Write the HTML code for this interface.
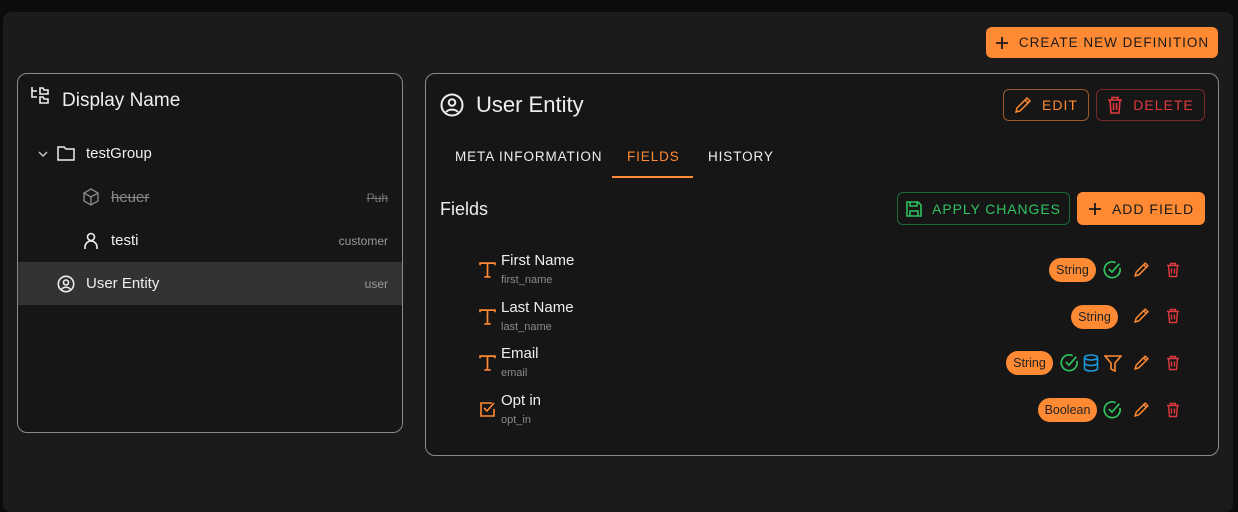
<!DOCTYPE html>
<html><head><meta charset="utf-8"><style>
*{box-sizing:border-box;margin:0;padding:0}
body{width:1238px;height:496px;background:#0c0c0c;font-family:"Liberation Sans",sans-serif;color:#eee;position:relative;overflow:hidden}
.abs{position:absolute}
.wrap{left:3px;top:12px;width:1230px;height:500px;background:#1b1b1b;border-radius:8px}
.card{background:#161616;border:1px solid #8a8a8a;border-radius:10px}
.btn{display:flex;align-items:center;justify-content:center;gap:10px;border-radius:6px;font-size:14px;letter-spacing:1px;font-weight:500}
.or{background:#ff8a33;color:#1a1a1a}
svg{display:block}
.chip{background:#ff8a33;color:#222;font-size:12.5px;border-radius:12px;height:24px;display:flex;align-items:center;justify-content:center}
.fn{font-size:15px;color:#eee}
.fs{font-size:11px;color:#8a8a8a}
.tab{font-size:13.5px;letter-spacing:0.9px}
</style></head><body>
<div class="abs wrap"></div>
<div class="abs btn or" style="left:986px;top:27px;width:232px;height:31px;font-size:13.5px;letter-spacing:1px">
<svg width="14" height="14" viewBox="0 0 14 14"><path d="M7 1v12M1 7h12" stroke="#1a1a1a" stroke-width="1.8"/></svg>CREATE NEW DEFINITION</div>

<div class="abs card" style="left:17px;top:73px;width:386px;height:360px;overflow:hidden">
 <svg class="abs" style="left:12px;top:12px" width="20" height="20" viewBox="0 0 20 20" fill="none" stroke="#eee" stroke-width="1.6"><path d="M2 1v10h5M2 5h5M10 2h3l1 2h4v4h-8zM10 11h3l1 2h4v4h-8z"/></svg>
 <div class="abs" style="left:44px;top:16px;font-size:19px">Display Name</div>
 <svg class="abs" style="left:20px;top:76px" width="10" height="8" viewBox="0 0 10 8"><path d="M1 2l4 4 4-4" stroke="#ccc" fill="none" stroke-width="1.4"/></svg>
 <svg class="abs" style="left:39px;top:71px" width="18" height="16" viewBox="0 0 18 16"><path d="M1 2h6l2 2h8v11H1z" fill="none" stroke="#eee" stroke-width="1.5"/></svg>
 <div class="abs" style="left:68px;top:71px;font-size:15px">testGroup</div>
 <svg class="abs" style="left:64px;top:114px" width="18" height="18" viewBox="0 0 18 18" fill="none" stroke="#888" stroke-width="1.4"><path d="M9 1l7 4v8l-7 4-7-4V5zM2 5l7 4 7-4M9 9v8"/></svg>
 <div class="abs" style="left:93px;top:115px;font-size:15px;color:#888;text-decoration:line-through">heuer</div>
 <div class="abs" style="right:14px;top:117px;font-size:12px;color:#777;text-decoration:line-through">Puh</div>
 <svg class="abs" style="left:65px;top:158px" width="16" height="18" viewBox="0 0 16 18" fill="none" stroke="#eee" stroke-width="1.6"><circle cx="8" cy="5" r="3.5"/><path d="M2 17v-2a6 6 0 0 1 12 0v2"/></svg>
 <div class="abs" style="left:93px;top:158px;font-size:15px">testi</div>
 <div class="abs" style="right:14px;top:160px;font-size:12px;color:#999">customer</div>
 <div class="abs" style="left:0;top:188px;width:386px;height:43px;background:#333"></div>
 <svg class="abs" style="left:39px;top:201px" width="18" height="18" viewBox="0 0 18 18" fill="none" stroke="#eee" stroke-width="1.6"><circle cx="9" cy="9" r="7.7"/><circle cx="9" cy="7.5" r="2.5"/><path d="M4.5 14.5a5 4 0 0 1 9 0"/></svg>
 <div class="abs" style="left:68px;top:201px;font-size:15px">User Entity</div>
 <div class="abs" style="right:14px;top:203px;font-size:12px;color:#999">user</div>
</div>

<div class="abs card" style="left:425px;top:73px;width:794px;height:383px">
 <svg class="abs" style="left:14px;top:19px" width="24" height="24" viewBox="0 0 24 24" fill="none" stroke="#eee" stroke-width="2"><circle cx="12" cy="12" r="10.5"/><circle cx="12" cy="9.5" r="3.3"/><path d="M6 19a7 5 0 0 1 12 0"/></svg>
 <div class="abs" style="left:50px;top:18px;font-size:22px">User Entity</div>
 <div class="abs btn" style="left:577px;top:15px;width:86px;height:32px;border:1px solid #9a5a2a;color:#ff8a33">
  <svg width="18" height="18" viewBox="0 0 18 18" fill="none" stroke="#ff8a33" stroke-width="1.5"><path d="M2 16l1-4L13 2l3 3L6 15zM11 4l3 3"/></svg>EDIT</div>
 <div class="abs btn" style="left:670px;top:15px;width:109px;height:32px;border:1px solid #7a2a2a;color:#e0393e">
  <svg width="16" height="18" viewBox="0 0 16 18" fill="none" stroke="#e0393e" stroke-width="1.6"><path d="M1 4h14M5 4V1.5h6V4M3 4l1 13h8l1-13M6.5 7v7M9.5 7v7"/></svg>DELETE</div>
 <div class="abs tab" style="left:29px;top:75px">META INFORMATION</div>
 <div class="abs tab" style="left:201px;top:75px;color:#ff8a33">FIELDS</div>
 <div class="abs" style="left:186px;top:102px;width:81px;height:2px;background:#ff8a33"></div>
 <div class="abs tab" style="left:282px;top:75px">HISTORY</div>
 <div class="abs" style="left:14px;top:125px;font-size:18px">Fields</div>
 <div class="abs btn" style="left:471px;top:118px;width:173px;height:33px;border:1px solid #1d6a36;color:#2fc25f;letter-spacing:0.9px">
  <svg width="16" height="16" viewBox="0 0 16 16" fill="none" stroke="#2fc25f" stroke-width="1.6"><path d="M1 1h11l3 3v11H1zM4 1v4h7V1M4 15v-5h8v5"/></svg>APPLY CHANGES</div>
 <div class="abs btn or" style="left:651px;top:118px;width:128px;height:33px">
  <svg width="14" height="14" viewBox="0 0 14 14"><path d="M7 1v12M1 7h12" stroke="#1a1a1a" stroke-width="1.8"/></svg>ADD FIELD</div>
</div>

<svg class="abs" style="left:479px;top:261px" width="17" height="17" viewBox="0 0 16 16" fill="none" stroke="#ff8a33" stroke-width="1.6"><path d="M1 4V2h14v2M8 2v13M5 15h6"/></svg>
<div class="abs fn" style="left:501px;top:252px">First Name</div><div class="abs fs" style="left:501px;top:274px">first_name</div>
<svg class="abs" style="left:479px;top:308px" width="17" height="17" viewBox="0 0 16 16" fill="none" stroke="#ff8a33" stroke-width="1.6"><path d="M1 4V2h14v2M8 2v13M5 15h6"/></svg>
<div class="abs fn" style="left:501px;top:299px">Last Name</div><div class="abs fs" style="left:501px;top:321px">last_name</div>
<svg class="abs" style="left:479px;top:354px" width="17" height="17" viewBox="0 0 16 16" fill="none" stroke="#ff8a33" stroke-width="1.6"><path d="M1 4V2h14v2M8 2v13M5 15h6"/></svg>
<div class="abs fn" style="left:501px;top:345px">Email</div><div class="abs fs" style="left:501px;top:367px">email</div>
<svg class="abs" style="left:480px;top:401px" width="17" height="16" viewBox="0 0 17 16" fill="none" stroke="#ff8a33" stroke-width="1.6"><path d="M12 2H1v13h13V8M4 7l3 3 7-8"/></svg>
<div class="abs fn" style="left:501px;top:392px">Opt in</div><div class="abs fs" style="left:501px;top:414px">opt_in</div>

<div class="abs chip" style="left:1049px;top:258px;width:47px">String</div>
<div class="abs chip" style="left:1071px;top:305px;width:47px">String</div>
<div class="abs chip" style="left:1006px;top:351px;width:47px">String</div>
<div class="abs chip" style="left:1038px;top:398px;width:59px">Boolean</div>

<svg width="0" height="0" style="position:absolute"><defs>
<symbol id="ck" viewBox="0 0 18 18"><path d="M16 7.5A7.5 7.5 0 1 1 12 2.5" fill="none" stroke="#2fc25f" stroke-width="1.6"/><path d="M5.5 8.5l3 3 7-8" fill="none" stroke="#2fc25f" stroke-width="1.6"/></symbol>
<symbol id="pn" viewBox="0 0 16 16"><path d="M2 14l1-3.5L11.5 2l2.5 2.5L5.5 13zM10 3.5l2.5 2.5" fill="none" stroke="#ff8a33" stroke-width="1.4"/></symbol>
<symbol id="tr" viewBox="0 0 14 16"><path d="M1 3.5h12M4.5 3.5V1.5h5v2M2.5 3.5l1 11h7l1-11M5.5 6.5v5M8.5 6.5v5" fill="none" stroke="#e0393e" stroke-width="1.4"/></symbol>
</defs></svg>
<svg class="abs" style="left:1103px;top:260px" width="19" height="19"><use href="#ck"/></svg>
<svg class="abs" style="left:1133px;top:261px" width="17" height="17"><use href="#pn"/></svg>
<svg class="abs" style="left:1166px;top:262px" width="14" height="16"><use href="#tr"/></svg>
<svg class="abs" style="left:1133px;top:307px" width="17" height="17"><use href="#pn"/></svg>
<svg class="abs" style="left:1166px;top:308px" width="14" height="16"><use href="#tr"/></svg>
<svg class="abs" style="left:1060px;top:353px" width="19" height="19"><use href="#ck"/></svg>
<svg class="abs" style="left:1083px;top:354px" width="16" height="18" viewBox="0 0 16 18" fill="none" stroke="#1e9be0" stroke-width="1.6"><ellipse cx="8" cy="3.5" rx="6.5" ry="2.5"/><path d="M1.5 3.5v11c0 1.4 2.9 2.5 6.5 2.5s6.5-1.1 6.5-2.5v-11M1.5 9c0 1.4 2.9 2.5 6.5 2.5s6.5-1.1 6.5-2.5"/></svg>
<svg class="abs" style="left:1104px;top:354px" width="18" height="18" viewBox="0 0 18 18" fill="none" stroke="#ff8a33" stroke-width="1.6"><path d="M1 2h16l-6 7v8l-4-2V9z"/></svg>
<svg class="abs" style="left:1133px;top:354px" width="17" height="17"><use href="#pn"/></svg>
<svg class="abs" style="left:1166px;top:355px" width="14" height="16"><use href="#tr"/></svg>
<svg class="abs" style="left:1103px;top:400px" width="19" height="19"><use href="#ck"/></svg>
<svg class="abs" style="left:1133px;top:401px" width="17" height="17"><use href="#pn"/></svg>
<svg class="abs" style="left:1166px;top:402px" width="14" height="16"><use href="#tr"/></svg>
</body></html>
